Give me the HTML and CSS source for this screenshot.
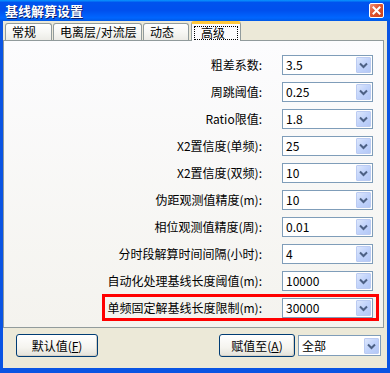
FILE: index.html
```html
<!DOCTYPE html>
<html>
<head>
    <title>基线解算设置</title>
    <link rel="stylesheet" href="styles.css">
</head>
<body>
    <div class="window">
        <div class="titlebar">
            <div class="title">基线解算设置</div>
            <div class="close-btn">
                <svg width="13" height="13" viewBox="0 0 13 13">
                    <path d="M3.5 3.5 L9.5 9.5 M9.5 3.5 L3.5 9.5" stroke="#fff" stroke-width="2" stroke-linecap="square"/>
                </svg>
            </div>
        </div>

        <div class="client">
            <div class="tabs">
                <div class="tab tab-general">常规</div>
                <div class="tab tab-iono">电离层/对流层</div>
                <div class="tab tab-kin">动态</div>
                <div class="tab tab-adv active"><span class="focus">高级</span></div>
            </div>

            <div class="panel">
                <div class="form">
                    <div class="label">粗差系数:</div>
                    <div class="combo"><span class="combo-text">3.5</span><span class="combo-arrow"></span></div>

                    <div class="label">周跳阈值:</div>
                    <div class="combo"><span class="combo-text">0.25</span><span class="combo-arrow"></span></div>

                    <div class="label">Ratio限值:</div>
                    <div class="combo"><span class="combo-text">1.8</span><span class="combo-arrow"></span></div>

                    <div class="label">X2置信度(单频):</div>
                    <div class="combo"><span class="combo-text">25</span><span class="combo-arrow"></span></div>

                    <div class="label">X2置信度(双频):</div>
                    <div class="combo"><span class="combo-text">10</span><span class="combo-arrow"></span></div>

                    <div class="label">伪距观测值精度(m):</div>
                    <div class="combo"><span class="combo-text">10</span><span class="combo-arrow"></span></div>

                    <div class="label">相位观测值精度(周):</div>
                    <div class="combo"><span class="combo-text">0.01</span><span class="combo-arrow"></span></div>

                    <div class="label">分时段解算时间间隔(小时):</div>
                    <div class="combo"><span class="combo-text">4</span><span class="combo-arrow"></span></div>

                    <div class="label">自动化处理基线长度阈值(m):</div>
                    <div class="combo"><span class="combo-text">10000</span><span class="combo-arrow"></span></div>

                    <div class="label">单频固定解基线长度限制(m):</div>
                    <div class="combo"><span class="combo-text">30000</span><span class="combo-arrow"></span></div>
                </div>
                <div class="highlight"></div>
            </div>

            <div class="footer">
                <button class="btn btn-default">默认值(<u>F</u>)</button>
                <div class="spacer"></div>
                <button class="btn btn-assign">赋值至(<u>A</u>)</button>
                <div class="combo combo-all"><span class="combo-text">全部</span><span class="combo-arrow"></span></div>
            </div>
        </div>
    </div>
</body>
</html>
```

FILE: styles.css
```css
body {
    margin: 0;
    background: #ece9d8;
    font-family: "Noto Sans CJK SC", "Liberation Sans", sans-serif;
    font-size: 12px;
    color: #000;
}

.window {
    width: 390px;
    height: 373px;
    display: flex;
    flex-direction: column;
    background: #0a54e3;
    overflow: hidden;
}

/* title bar */
.titlebar {
    height: 21px;
    display: flex;
    align-items: center;
    padding: 0 6px 0 5px;
    background: linear-gradient(to bottom, #0997ff 0%, #0053ee 12%, #0050ee 50%, #0066ff 85%, #0058e5 100%);
}

.title {
    flex: 1;
    color: #fff;
    font-weight: bold;
    font-size: 13px;
    line-height: 13px;
    text-shadow: 1px 1px 0 #0a1e6e;
}

.close-btn {
    width: 13px;
    height: 13px;
    border: 1px solid #fff;
    border-radius: 2px;
    background: linear-gradient(135deg, #f19177 0%, #e0532e 45%, #c9401a 100%);
    display: flex;
}

/* dialog client area */
.client {
    flex: 1;
    display: flex;
    flex-direction: column;
    background: #ece9d8;
    margin: 0 3px 5px 3px;
}

.tabs {
    height: 19px;
    display: flex;
    align-items: flex-end;
    padding-left: 2px;
    gap: 1px;
}

.tab {
    height: 16px;
    line-height: 16px;
    padding-left: 6px;
    border: 1px solid #919b9c;
    border-bottom: none;
    border-radius: 3px 3px 0 0;
    background: linear-gradient(to bottom, #ffffff 0%, #f7f7f4 50%, #ecebe6 100%);
}

.tab-general { width: 39px; }
.tab-iono { width: 81px; }
.tab-kin { width: 38px; }

.tab.active {
    width: 48px;
    height: 17px;
    padding-left: 0;
    margin-left: 1px;
    margin-bottom: -1px;
    background: #fcfcfe;
    border-top: 3px solid #ffc83c;
    position: relative;
    z-index: 1;
    display: flex;
    align-items: center;
    justify-content: center;
}

.focus {
    width: 44px;
    height: 14px;
    line-height: 12px;
    border: 1px dotted #000;
    padding-left: 6px;
    box-sizing: border-box;
}

/* tab page */
.panel {
    position: relative;
    height: 288px;
    margin-right: 3px;
    border: 1px solid #919b9c;
    background: linear-gradient(to bottom, #fcfcfe 0%, #f4f3ee 100%);
    padding: 14px 10px 0 0;
    box-sizing: border-box;
}

.form {
    display: grid;
    grid-template-columns: auto 91px;
    justify-content: end;
    column-gap: 20px;
    row-gap: 7px;
    align-items: center;
}

.label {
    text-align: right;
    white-space: nowrap;
    line-height: 20px;
}

.combo {
    height: 20px;
    border: 1px solid #7f9db9;
    background: #fff;
    display: flex;
    align-items: center;
    box-sizing: border-box;
    padding: 1px;
}

.combo-text {
    flex: 1;
    padding-left: 2px;
    line-height: 16px;
}

.combo-arrow {
    width: 15px;
    height: 16px;
    border-radius: 1px;
    background:
        url("data:image/svg+xml;utf8,<svg xmlns='http://www.w3.org/2000/svg' width='15' height='16'><path d='M4 6.5 L7.5 10 L11 6.5' fill='none' stroke='%234d6185' stroke-width='2'/></svg>") no-repeat center,
        linear-gradient(to bottom right, #dde7fc 0%, #c1d3fb 50%, #b4c8f6 100%);
    border: 1px solid #bbcbf2;
    box-sizing: border-box;
}

/* annotation overlay */
.highlight {
    position: absolute;
    left: 98px;
    top: 253px;
    width: 277px;
    height: 27px;
    border: 3px solid #ff0000;
    box-sizing: border-box;
}

/* buttons below the page */
.footer {
    display: flex;
    align-items: center;
    padding: 6px 6px 0 13px;
}

.spacer {
    flex: 1;
}

.btn {
    height: 23px;
    border: 1px solid #003c74;
    border-radius: 3px;
    background: linear-gradient(to bottom, #ffffff 0%, #f5f4ef 60%, #e3e2da 100%);
    font-family: inherit;
    font-size: 12px;
    padding: 0;
    color: #000;
    box-shadow: inset -1px -1px 0 #d6d0c5;
}

.btn-default {
    width: 82px;
}

.btn-assign {
    width: 76px;
    margin-right: 3px;
}

.combo-all {
    width: 83px;
    height: 21px;
}
```
